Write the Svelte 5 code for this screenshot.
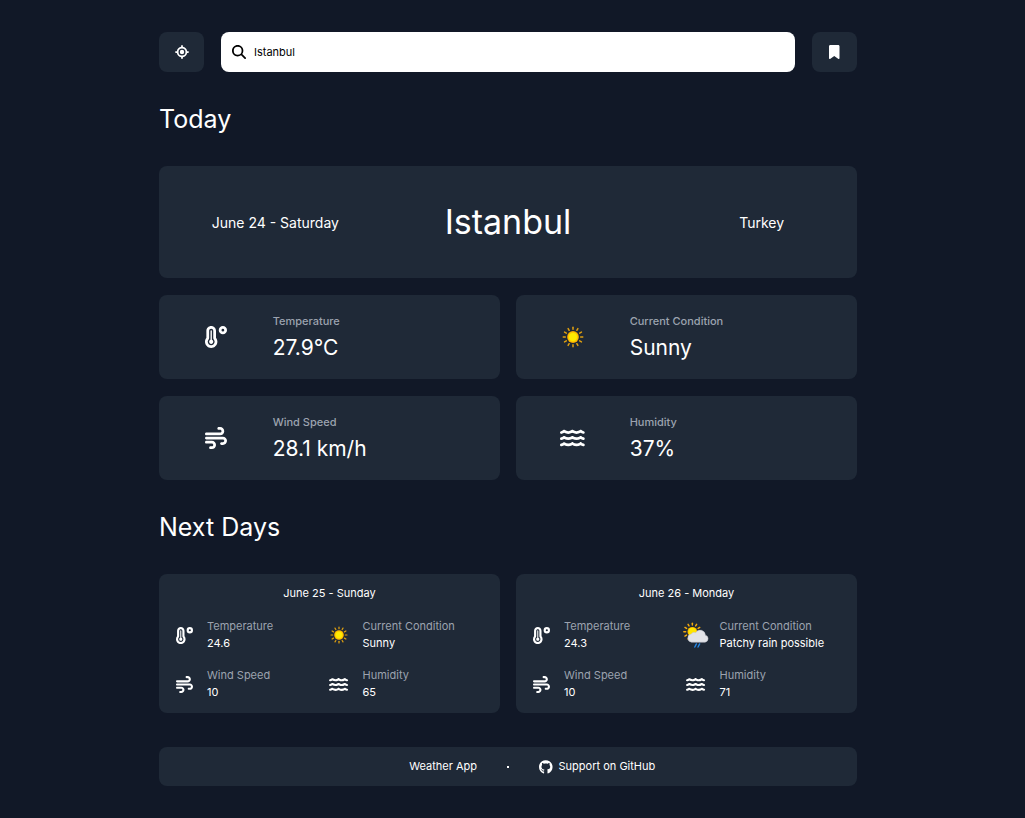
<script>
  let city = $state('Istanbul');

  const summary = [
    { icon: 'temp', label: 'Temperature', value: '27.9°C' },
    { icon: 'sun', label: 'Current Condition', value: 'Sunny' },
    { icon: 'wind', label: 'Wind Speed', value: '28.1 km/h' },
    { icon: 'water', label: 'Humidity', value: '37%' }
  ];

  const days = [
    {
      date: 'June 25 - Sunday',
      items: [
        { icon: 'temp', label: 'Temperature', value: '24.6' },
        { icon: 'sun', label: 'Current Condition', value: 'Sunny' },
        { icon: 'wind', label: 'Wind Speed', value: '10' },
        { icon: 'water', label: 'Humidity', value: '65' }
      ]
    },
    {
      date: 'June 26 - Monday',
      items: [
        { icon: 'temp', label: 'Temperature', value: '24.3' },
        { icon: 'rain', label: 'Current Condition', value: 'Patchy rain possible' },
        { icon: 'wind', label: 'Wind Speed', value: '10' },
        { icon: 'water', label: 'Humidity', value: '71' }
      ]
    }
  ];

  const rays = Array.from({ length: 12 }, (_, i) => i * 30);
</script>

{#snippet icon(name)}
  {#if name === 'temp'}
    <svg class="glyph" viewBox="0 0 512 512" aria-hidden="true">
      <path d="M416 64a32 32 0 1 1 0 64 32 32 0 1 1 0-64zm0 128A96 96 0 1 0 416 0a96 96 0 1 0 0 192zM96 112c0-26.500 21.500-48 48-48s48 21.500 48 48V276.500c0 17.300 7.100 31.900 15.300 42.500C217.800 332.600 224 349.500 224 368c0 44.200-35.800 80-80 80s-80-35.800-80-80c0-18.500 6.200-35.400 16.700-48.900C88.900 308.400 96 293.800 96 276.500V112zM144 0C82.100 0 32 50.200 32 112V276.500c0 .1-.1 .3-.2 .6c-.2 .6-.8 1.600-1.700 2.800C11.200 304.200 0 334.800 0 368c0 79.500 64.500 144 144 144s144-64.500 144-144c0-33.200-11.200-63.800-30.100-88.100c-.9-1.200-1.500-2.200-1.700-2.800c-.1-.3-.2-.5-.2-.6V112C256 50.200 205.900 0 144 0zm0 416c26.500 0 48-21.500 48-48c0-20.900-13.400-38.700-32-45.300V112c0-8.800-7.200-16-16-16s-16 7.200-16 16V322.700c-18.600 6.600-32 24.400-32 45.300c0 26.500 21.500 48 48 48z" />
    </svg>
  {:else if name === 'wind'}
    <svg class="glyph" viewBox="0 0 512 512" aria-hidden="true">
      <path d="M288 32c0 17.700 14.300 32 32 32h32c17.700 0 32 14.300 32 32s-14.300 32-32 32H32c-17.700 0-32 14.300-32 32s14.300 32 32 32H352c53 0 96-43 96-96s-43-96-96-96H320c-17.700 0-32 14.300-32 32zm64 352c0 17.700 14.300 32 32 32h32c53 0 96-43 96-96s-43-96-96-96H32c-17.700 0-32 14.300-32 32s14.300 32 32 32H416c17.700 0 32 14.300 32 32s-14.300 32-32 32H384c-17.700 0-32 14.300-32 32zM128 512h32c53 0 96-43 96-96s-43-96-96-96H32c-17.700 0-32 14.300-32 32s14.300 32 32 32H160c17.700 0 32 14.300 32 32s-14.300 32-32 32H128c-17.700 0-32 14.300-32 32s14.300 32 32 32z" />
    </svg>
  {:else if name === 'water'}
    <svg class="glyph" viewBox="0 0 576 512" aria-hidden="true">
      {#each [0, 144, 288] as y}
        <path transform="translate(0 {y})" d="M269.500 69.900c11.100-7.900 25.900-7.900 37 0C329 85.400 356.500 96 384 96c26.900 0 55.400-10.800 77.400-26.100c11.900-8.500 28.100-7.800 39.200 1.700c14.400 11.900 32.500 21 50.600 25.200c17.200 4 27.900 21.200 23.900 38.400s-21.200 27.900-38.400 23.900c-24.500-5.700-44.900-16.500-58.200-25C449.500 149.700 417 160 384 160c-31.900 0-60.600-9.900-80.400-18.900c-5.800-2.700-11.100-5.300-15.600-7.700c-4.500 2.400-9.700 5.100-15.600 7.700c-19.800 9-48.500 18.900-80.400 18.900c-33 0-65.500-10.300-94.500-25.800c-13.400 8.400-33.700 19.300-58.200 25c-17.200 4-34.400-6.700-38.400-23.900s6.700-34.400 23.900-38.400C42.800 92.600 61 83.500 75.300 71.600c11.100-9.500 27.300-10.100 39.200-1.700C136.700 85.200 165.100 96 192 96c27.500 0 55-10.600 77.500-26.100z" />
      {/each}
    </svg>
  {:else if name === 'sun'}
    <svg class="picture sun" viewBox="-14 -14 28 28" aria-hidden="true">
      {#each rays as angle}
        <path d="M0-9.800V-12.400" stroke="#e0a010" stroke-width="1.900" stroke-linecap="round" transform="rotate({angle})" />
      {/each}
      <circle r="7.500" fill="#f5a300" />
      <circle r="6.600" fill="#fdc800" />
      <circle r="5" fill="#ffea00" />
    </svg>
  {:else}
    <svg class="picture" viewBox="0 0 32 32" aria-hidden="true">
      {#each rays as angle}
        <path d="M0-8.200V-10.500" stroke="#f5aa0c" stroke-width="1.800" stroke-linecap="round" transform="translate(11.500 12) rotate({angle})" />
      {/each}
      <circle cx="11.500" cy="12" r="6" fill="#f9b400" />
      <circle cx="11.500" cy="12" r="4.800" fill="#ffe500" />
      <path d="M10.500 24.800a5 5 0 0 1-.4-9.900 4.500 4.500 0 0 1 5.400-1.800 6.500 6.500 0 0 1 12 3.100 4.400 4.400 0 0 1-.3 8.600z" fill="#e2e3e8" stroke="#c3c5cc" stroke-width=".7" />
      <path d="M16.500 27l-2 3.800M20.500 27l-2 3.800" stroke="#2589e8" stroke-width="1.700" stroke-linecap="round" />
    </svg>
  {/if}
{/snippet}

<div class="page">
  <main>
    <header>
      <button type="button" aria-label="Use current location">
        <svg class="small" viewBox="0 0 512 512" aria-hidden="true">
          <path d="M256 0c17.700 0 32 14.300 32 32V66.700C368.400 80.100 431.900 143.600 445.300 224H480c17.700 0 32 14.300 32 32s-14.300 32-32 32H445.300C431.900 368.400 368.400 431.900 288 445.300V480c0 17.700-14.300 32-32 32s-32-14.300-32-32V445.300C143.600 431.900 80.100 368.400 66.700 288H32c-17.700 0-32-14.300-32-32s14.300-32 32-32H66.700C80.100 143.600 143.600 80.100 224 66.700V32c0-17.700 14.300-32 32-32zM128 256a128 128 0 1 0 256 0 128 128 0 1 0-256 0zm128-80a80 80 0 1 1 0 160 80 80 0 1 1 0-160z" />
        </svg>
      </button>
      <label class="search">
        <svg class="small" viewBox="0 0 512 512" aria-hidden="true">
          <path d="M416 208c0 45.900-14.900 88.300-40 122.700L502.600 457.400c12.500 12.500 12.500 32.800 0 45.300s-32.800 12.500-45.300 0L330.700 376c-34.400 25.200-76.800 40-122.700 40C93.100 416 0 322.900 0 208S93.100 0 208 0S416 93.100 416 208zM208 352a144 144 0 1 0 0-288 144 144 0 1 0 0 288z" />
        </svg>
        <input type="text" aria-label="Search city" bind:value={city} />
      </label>
      <button type="button" aria-label="Bookmarks">
        <svg class="small" viewBox="0 0 384 512" aria-hidden="true">
          <path d="M0 48V487.700C0 501.100 10.900 512 24.300 512c5 0 9.900-1.500 14-4.400L192 400 345.700 507.600c4.100 2.900 9 4.400 14 4.400c13.400 0 24.300-10.900 24.300-24.300V48c0-26.500-21.500-48-48-48H48C21.500 0 0 21.500 0 48z" />
        </svg>
      </button>
    </header>

    <h1>Today</h1>
    <div class="grid">
      <section class="card hero">
        <p>June 24 - Saturday</p>
        <h2>Istanbul</h2>
        <p class="country">Turkey</p>
      </section>
      {#each summary as item}
        <section class="card stat">
          <div class="stat-icon">{@render icon(item.icon)}</div>
          <div class="stat-text">
            <p class="label">{item.label}</p>
            <p class="value">{item.value}</p>
          </div>
        </section>
      {/each}
    </div>

    <h1>Next Days</h1>
    <div class="grid">
      {#each days as day}
        <section class="card day">
          <h3>{day.date}</h3>
          <div class="details">
            {#each day.items as item}
              <div class="detail">
                <div class="detail-icon">{@render icon(item.icon)}</div>
                <div>
                  <p class="muted">{item.label}</p>
                  <p>{item.value}</p>
                </div>
              </div>
            {/each}
          </div>
        </section>
      {/each}
    </div>

    <footer class="card">
      <span class="brand">Weather App</span>
      <span class="dot"></span>
      <a href="#github">
        <svg class="small" viewBox="0 0 496 512" aria-hidden="true">
          <path d="M165.900 397.400c0 2-2.300 3.600-5.200 3.600-3.300.3-5.600-1.300-5.600-3.600 0-2 2.300-3.600 5.200-3.600 3-.3 5.600 1.300 5.600 3.600zM244.800 8C106.100 8 0 113.300 0 252c0 110.900 69.800 205.800 169.500 239.200 12.800 2.300 17.300-5.600 17.300-12.100 0-6.200-.3-40.400-.3-61.400 0 0-70 15-84.700-29.800 0 0-11.400-29.100-27.800-36.600 0 0-22.900-15.700 1.600-15.400 0 0 24.900 2 38.600 25.800 21.900 38.600 58.600 27.500 72.900 20.900 2.300-16 8.800-27.100 16-33.700-55.900-6.200-112.300-14.300-112.300-110.500 0-27.500 7.600-41.300 23.600-58.900-2.600-6.500-11.100-33.300 2.600-67.900 20.900-6.500 69 27 69 27 20-5.600 41.500-8.500 62.800-8.500s42.800 2.900 62.800 8.500c0 0 48.100-33.600 69-27 13.700 34.700 5.200 61.400 2.600 67.900 16 17.700 25.800 31.500 25.800 58.900 0 96.500-58.900 104.200-114.800 110.500 9.200 7.900 17 22.900 17 46.400 0 33.700-.3 75.400-.3 83.600 0 6.500 4.600 14.400 17.300 12.100C428.200 457.800 496 362.900 496 252 496 113.300 383.500 8 244.800 8z" />
        </svg>
        <span>Support on GitHub</span>
      </a>
    </footer>
  </main>
</div>

<style>
  :global(body) {
    margin: 0;
    background: #111827;
  }
  .page {
    padding: 32px 25px 32px 16px;
    color: #fff;
    font-family: Inter, 'Noto Sans', sans-serif;
    font-size: 11px;
    line-height: 17px;
  }
  main {
    max-width: 698px;
    margin: 0 auto;
  }
  h1,
  h2,
  h3,
  p {
    margin: 0;
    font-weight: 400;
  }
  svg {
    display: block;
    flex: none;
    fill: currentColor;
  }
  .small {
    height: 14px;
  }
  header {
    display: flex;
    gap: 17px;
    height: 40px;
  }
  button {
    display: flex;
    align-items: center;
    justify-content: center;
    width: 45px;
    padding: 0;
    border: 0;
    border-radius: 8px;
    background: #1f2937;
    color: #fff;
    cursor: pointer;
  }
  .search {
    display: flex;
    flex: 1;
    align-items: center;
    gap: 8px;
    padding: 0 11px;
    border-radius: 8px;
    background: #fff;
    color: #000;
  }
  input {
    flex: 1;
    min-width: 0;
    padding: 0;
    border: 0;
    outline: 0;
    background: transparent;
    color: inherit;
    font: inherit;
  }
  h1 {
    padding: 29px 0;
    font-size: 25px;
    line-height: 36px;
  }
  .grid {
    display: grid;
    grid-template-columns: 1fr 1fr;
    gap: 17px 16px;
  }
  .card {
    border-radius: 8px;
    background: #1f2937;
  }
  .hero {
    display: grid;
    grid-column: 1 / -1;
    grid-template-columns: repeat(3, 1fr);
    align-items: center;
    min-height: 112px;
    font-size: 14px;
    text-align: center;
  }
  .hero h2 {
    font-size: 34px;
    line-height: 40px;
  }
  .country {
    padding-left: 42px;
  }
  .stat {
    display: grid;
    grid-template-columns: 1fr 2fr;
    align-items: center;
    min-height: 84px;
  }
  .stat-icon,
  .detail-icon {
    display: flex;
    align-items: center;
    justify-content: center;
  }
  .stat-icon .glyph {
    height: 22px;
  }
  .stat-icon .sun {
    height: 22px;
  }
  .stat-text {
    padding-top: 4px;
  }
  .label {
    color: #9ca3af;
    font-weight: 500;
  }
  .value {
    font-size: 21px;
    line-height: 36px;
  }
  .day {
    padding: 11px 17px 12px;
  }
  .day h3 {
    font-size: 11px;
    text-align: center;
  }
  .details {
    display: grid;
    grid-template-columns: 1fr 1fr;
    gap: 15px 0;
    padding-top: 16px;
  }
  .detail {
    display: flex;
    align-items: center;
    gap: 14px;
    white-space: nowrap;
  }
  .detail-icon {
    width: 17px;
  }
  .detail:nth-child(even) .detail-icon {
    width: 19px;
  }
  .detail-icon .glyph {
    height: 17px;
  }
  .detail-icon .picture {
    height: 26px;
  }
  .detail-icon .sun {
    height: 18px;
  }
  .muted {
    color: #9ca3af;
  }
  footer {
    display: grid;
    grid-template-columns: 1fr auto 1fr;
    align-items: center;
    gap: 30px;
    min-height: 39px;
    margin-top: 34px;
  }
  .brand {
    text-align: right;
  }
  .dot {
    width: 2px;
    height: 2px;
    background: #fff;
  }
  a {
    display: flex;
    align-items: center;
    gap: 6px;
    color: inherit;
    text-decoration: none;
  }
</style>
